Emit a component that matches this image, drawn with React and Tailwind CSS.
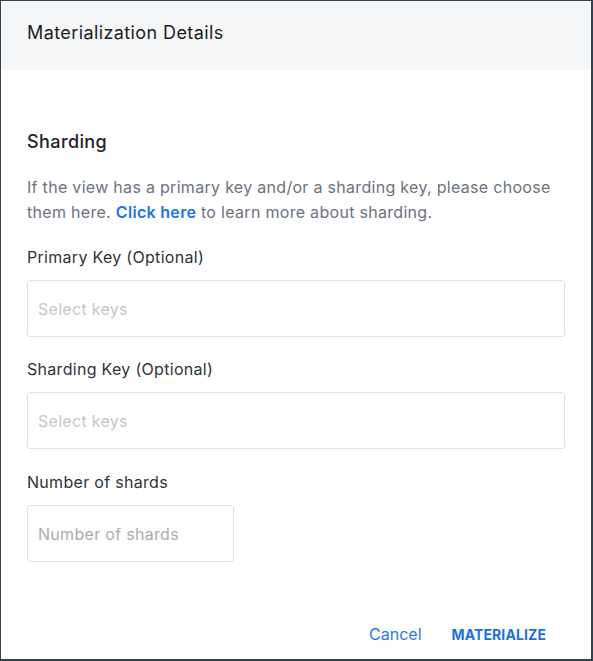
export default function App() {
  return (
    <div
      className="w-[593px] h-[661px] bg-white border-t border-l border-r-2 border-b-2 border-[#2f4553] flex flex-col tracking-[0.3px]"
      style={{ fontFamily: "Inter, 'Noto Sans', sans-serif" }}
    >
      {/* Header */}
      <div className="h-[69px] bg-[#f5f6f8] flex items-center px-[26px] pb-[6px]">
        <h1 className="text-[18px] text-[#1c1e21] tracking-[0.4px]">Materialization Details</h1>
      </div>

      <div className="flex-1 flex flex-col px-[26px] pt-[60px]">
        <h2 className="text-[18px] font-medium text-[#1f2328] leading-[24px] tracking-[0.4px]">Sharding</h2>

        <p className="mt-[21px] text-[16px] leading-[25px] text-[#6b7280]">
          If the view has a primary key and/or a sharding key, please choose them here.{" "}
          <a href="#" className="text-[#1a73e8] font-semibold">Click here</a> to learn more about sharding.
        </p>

        <label className="mt-[21px] text-[16px] leading-[22px] text-[#2e3338]">Primary Key (Optional)</label>
        <input
          className="mt-[12px] h-[57px] w-full rounded-[3px] border border-[#dfe2e7] px-[10px] text-[16px] placeholder:text-[#c3c6cc] outline-none"
          placeholder="Select keys"
        />

        <label className="mt-[21px] text-[16px] leading-[22px] text-[#2e3338]">Sharding Key (Optional)</label>
        <input
          className="mt-[12px] h-[57px] w-full rounded-[3px] border border-[#dfe2e7] px-[10px] text-[16px] placeholder:text-[#c3c6cc] outline-none"
          placeholder="Select keys"
        />

        <label className="mt-[22px] text-[16px] leading-[22px] text-[#2e3338]">Number of shards</label>
        <input
          className="mt-[12px] h-[57px] w-[207px] rounded-[3px] border border-[#dfe2e7] px-[10px] text-[16px] placeholder:text-[#a9acb1] outline-none"
          placeholder="Number of shards"
        />

        <div className="mt-auto mb-[13px] flex items-center justify-end gap-[30px] pr-[19px]">
          <button className="text-[16px] text-[#2a7ae2] tracking-[0px]">Cancel</button>
          <button className="text-[14px] font-bold tracking-[0.1px] text-[#1b72d8]">MATERIALIZE</button>
        </div>
      </div>
    </div>
  );
}
